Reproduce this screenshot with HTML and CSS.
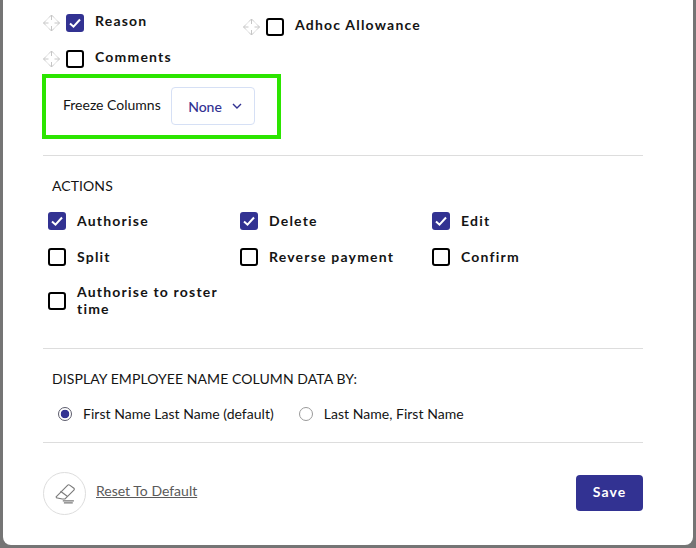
FILE: index.html
```html
<!DOCTYPE html>
<html>
<head>
    <title>Column Settings</title>
    <link rel="stylesheet" href="styles.css">
</head>
<body>
    <div class="modal">
        <div class="columns">
            <div class="column-list">
                <div class="drag-item">
                    <svg class="drag-icon" viewBox="0.5 0 18 18"><use href="#move"/></svg>
                    <span class="box checked"><svg viewBox="0 0 18 18"><path d="M4 9.5l3.500 3.200L14 5.500"/></svg></span>
                    <span class="check-label">Reason</span>
                </div>
                <div class="drag-item">
                    <svg class="drag-icon" viewBox="0.5 0 18 18"><use href="#move"/></svg>
                    <span class="box"></span>
                    <span class="check-label">Comments</span>
                </div>
            </div>
            <div class="column-list second">
                <div class="drag-item">
                    <svg class="drag-icon" viewBox="0.5 0 18 18">
                        <g id="move">
                            <path d="M9 1v5M9 12v5M1 9h5M12 9h5"/>
                            <path d="M6.500 3.500L9 1l2.500 2.500M6.500 14.500L9 17l2.500-2.500M3.500 6.500L1 9l2.500 2.500M14.500 6.500L17 9l-2.500 2.500"/>
                            <path class="drag-edge" d="M6.500 3.500l-3 3M11.500 3.500l3 3M3.500 11.500l3 3M14.500 11.500l-3 3"/>
                        </g>
                    </svg>
                    <span class="box"></span>
                    <span class="check-label">Adhoc Allowance</span>
                </div>
            </div>
        </div>

        <div class="freeze">
            <span class="freeze-label">Freeze Columns</span>
            <div class="dropdown">
                None
                <svg viewBox="0 0 10 6"><path d="M1 1l4 4 4-4"/></svg>
            </div>
        </div>

        <hr class="divider first">

        <h4 class="section-title">ACTIONS</h4>
        <div class="actions">
            <div class="action"><span class="box checked"><svg viewBox="0 0 18 18"><path d="M4 9.5l3.500 3.200L14 5.500"/></svg></span><span class="check-label">Authorise</span></div>
            <div class="action"><span class="box checked"><svg viewBox="0 0 18 18"><path d="M4 9.5l3.500 3.200L14 5.500"/></svg></span><span class="check-label">Delete</span></div>
            <div class="action"><span class="box checked"><svg viewBox="0 0 18 18"><path d="M4 9.5l3.500 3.200L14 5.500"/></svg></span><span class="check-label">Edit</span></div>
            <div class="action"><span class="box"></span><span class="check-label">Split</span></div>
            <div class="action"><span class="box"></span><span class="check-label">Reverse payment</span></div>
            <div class="action"><span class="box"></span><span class="check-label">Confirm</span></div>
            <div class="action"><span class="box"></span><span class="check-label">Authorise to roster time</span></div>
        </div>

        <hr class="divider second">

        <h4 class="section-title name-title">DISPLAY EMPLOYEE NAME COLUMN DATA BY:</h4>
        <div class="radios">
            <div class="radio-item"><span class="radio selected"></span>First Name Last Name (default)</div>
            <div class="radio-item"><span class="radio"></span>Last Name, First Name</div>
        </div>

        <hr class="divider third">

        <div class="footer">
            <div class="reset">
                <span class="reset-icon">
                    <svg viewBox="1 2 18 18">
                        <path d="M2 13.500L12.500 3a1.200 1.200 0 0 1 1.700 0l3.800 2.800a1.200 1.200 0 0 1 0 1.700L10 15.500H7.500L2.300 14.500z"/>
                        <path d="M6 8.500l6 4.500"/>
                        <path d="M8 17.200h10M9 19h8"/>
                    </svg>
                </span>
                <a class="reset-link">Reset To Default</a>
            </div>
            <button class="save">Save</button>
        </div>
    </div>
</body>
</html>
```

FILE: styles.css
```css
body {
    font-family: Lato, Arial, sans-serif;
    background-color: #757575;
    margin: 0;
    padding: 0;
    color: #141414;
}
.modal {
    background: #ffffff;
    width: 690px;
    height: 545px;
    margin-left: 3px;
    padding: 14px 50px 0 40px;
    box-sizing: border-box;
    border-radius: 0 0 8px 8px;
    overflow: hidden;
}
.columns {
    display: flex;
    height: 60px;
}
.column-list {
    width: 200px;
    display: flex;
    flex-direction: column;
    gap: 18px;
}
.column-list.second {
    padding-top: 4px;
}
.drag-item {
    display: flex;
    align-items: center;
    height: 18px;
}
.drag-item .check-label {
    top: -3px;
}
.drag-icon {
    width: 18px;
    height: 18px;
    margin-right: 5px;
    fill: none;
    stroke: #c6c6c6;
    stroke-width: 1;
    flex: none;
}
.drag-edge {
    stroke-opacity: 0.5;
}
.box {
    width: 18px;
    height: 18px;
    box-sizing: border-box;
    border: 2px solid #000000;
    border-radius: 3px;
    flex: none;
    display: block;
}
.box.checked {
    background: #323292;
    border: none;
}
.box svg {
    display: block;
    width: 18px;
    height: 18px;
    fill: none;
    stroke: #ffffff;
    stroke-width: 2;
}
.check-label {
    margin-left: 11px;
    font-size: 14px;
    font-weight: 700;
    letter-spacing: 1.2px;
    line-height: 17px;
    position: relative;
    top: -1px;
}
.freeze {
    width: 239px;
    height: 65px;
    box-sizing: border-box;
    border: 4px solid #2ce500;
    margin-left: -1px;
    display: flex;
    align-items: center;
    padding: 0 0 1px 17px;
}
.freeze-label {
    font-size: 14px;
    width: 108px;
    flex: none;
    position: relative;
    top: -2px;
}
.dropdown {
    width: 84px;
    height: 38px;
    box-sizing: border-box;
    border: 1px solid #d6e0f5;
    border-radius: 4px;
    color: #323292;
    font-size: 14px;
    font-weight: 500;
    display: flex;
    align-items: center;
    justify-content: center;
    gap: 10px;
    padding-left: 4px;
}
.dropdown svg {
    width: 10px;
    height: 6px;
    fill: none;
    stroke: #323292;
    stroke-width: 1.4;
}
.divider {
    border: none;
    border-top: 1px solid #dddddd;
    margin: 0;
    width: 600px;
}
.divider.first {
    margin-top: 16px;
}
.divider.second {
    margin-top: 30px;
}
.divider.third {
    margin-top: 20px;
}
.section-title {
    margin: 21px 0 0 9px;
    font-size: 14px;
    font-weight: 400;
    line-height: 17px;
    letter-spacing: 0.08px;
}
.actions {
    display: grid;
    grid-template-columns: 192px 192px 192px;
    row-gap: 18px;
    margin: 18px 0 0 5px;
}
.action {
    display: flex;
    align-items: center;
    min-height: 18px;
}
.action .check-label {
    width: 150px;
}
.radios {
    display: flex;
    margin: 18px 0 0 15px;
    gap: 25px;
}
.radio-item {
    display: flex;
    align-items: center;
    font-size: 14px;
    line-height: 17px;
    letter-spacing: 0.03px;
}
.radio {
    width: 14px;
    height: 14px;
    box-sizing: border-box;
    border: 1px solid #9a9a9a;
    border-radius: 50%;
    margin-right: 11px;
    background: #ffffff;
}
.radio.selected {
    border-color: #5c5c6c;
    background: radial-gradient(circle, #323292 0, #323292 4px, #ffffff 4.6px);
}
.footer {
    display: flex;
    justify-content: space-between;
    width: 600px;
    margin-top: 29px;
}
.reset {
    display: flex;
    align-items: flex-start;
}
.reset-icon {
    width: 43px;
    height: 43px;
    box-sizing: border-box;
    border: 1px solid #dddddd;
    border-radius: 50%;
    display: flex;
    align-items: center;
    justify-content: center;
    margin-right: 10px;
}
.reset-icon svg {
    width: 20px;
    height: 20px;
    fill: none;
    stroke: #7a7a7a;
    stroke-width: 1;
}
.reset-link {
    font-size: 14px;
    line-height: 17px;
    color: #5a5a5a;
    text-decoration: underline;
    margin-top: 10px;
}
.save {
    width: 67px;
    height: 36px;
    margin-top: 3px;
    padding: 0 0 3px;
    border: none;
    border-radius: 4px;
    background: #323292;
    color: #ffffff;
    font-family: Lato, Arial, sans-serif;
    font-size: 14px;
    font-weight: 700;
    letter-spacing: 1.1px;
}
```
